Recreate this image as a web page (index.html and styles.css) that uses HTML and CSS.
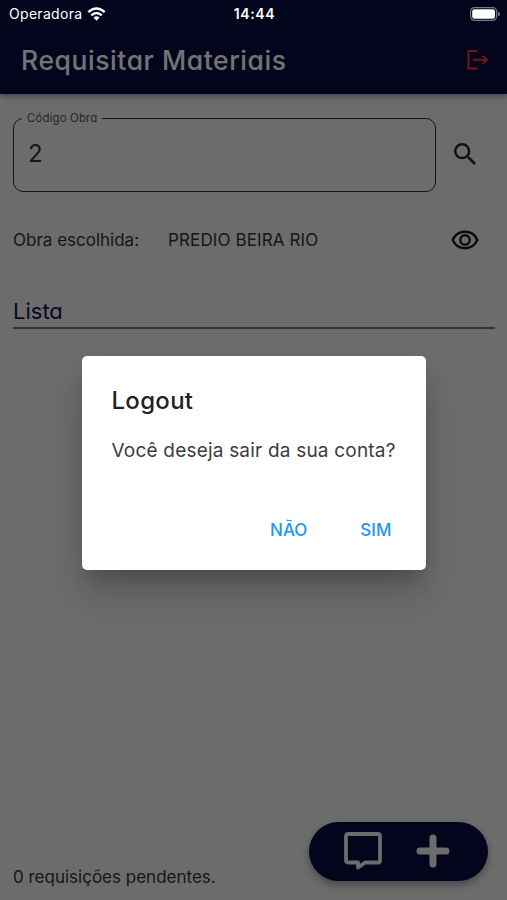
FILE: index.html
```
<!DOCTYPE html>
<html lang="pt-BR">
<head>
    <meta charset="utf-8">
    <title>Requisitar Materiais</title>
    <meta name="viewport" content="width=device-width, initial-scale=1.0">
    <link rel="stylesheet" href="styles.css">
</head>
<body>
    <div class="screen">
        <header class="app-bar">
            <h1>Requisitar Materiais</h1>
            <svg class="exit-icon" viewBox="0 0 22 20" width="22" height="20">
                <path d="M10.5 1H1.5V18.5H10.5M6 9.8H20M15.5 5.8L20 9.8L15.5 13.8"/>
            </svg>
        </header>

        <main class="content">
            <div class="search-row">
                <fieldset class="field">
                    <legend>Código Obra</legend>
                    <div class="field-value">2</div>
                </fieldset>
                <svg class="search-icon" viewBox="3 3 17.5 17.5" width="22" height="22">
                    <path d="M15.5 14h-.79l-.28-.27A6.471 6.471 0 0 0 16 9.5 6.5 6.5 0 1 0 9.5 16c1.61 0 3.09-.59 4.23-1.57l.27.28v.79l5 4.99L20.49 19l-4.99-5zm-6 0C7.01 14 5 11.99 5 9.5S7.01 5 9.5 5 14 7.01 14 9.5 11.99 14 9.5 14z"/>
                </svg>
            </div>

            <div class="chosen-row">
                <span class="chosen-label">Obra escolhida:</span>
                <span class="chosen-name">PREDIO BEIRA RIO</span>
                <svg class="eye-icon" viewBox="0 0 28 20" width="28" height="20">
                    <path d="M1.7 10C4 4.7 8.5 1.8 14 1.8S24 4.7 26.3 10C24 15.3 19.5 18.2 14 18.2S4 15.3 1.7 10Z"/>
                    <circle cx="14" cy="10" r="4.7"/>
                </svg>
            </div>

            <h2>Lista</h2>
        </main>

        <footer class="bottom">
            <p class="pending">0 requisições pendentes.</p>
            <div class="fab">
                <svg class="comment-icon" viewBox="0 0 38 38" width="38" height="38">
                    <path d="M4 2H34Q36 2 36 4V28.5Q36 30.5 34 30.5H21L14 35.5V30.5H4Q2 30.5 2 28.5V4Q2 2 4 2Z"/>
                </svg>
                <svg class="plus-icon" viewBox="0 0 34 34" width="34" height="34">
                    <path d="M17 4V30M4 17H30"/>
                </svg>
            </div>
        </footer>
    </div>

    <div class="overlay">
        <div class="dialog">
            <h3>Logout</h3>
            <p>Você deseja sair da sua conta?</p>
            <div class="actions">
                <button class="no">NÃO</button>
                <button class="yes">SIM</button>
            </div>
        </div>
    </div>

    <div class="status-bar">
        <div class="carrier">
            <span>Operadora</span>
            <svg viewBox="0 0 20 15" width="19" height="14">
                <path class="wave" d="M1.2 5.5Q10 -2.4 18.8 5.5M4.4 8.9Q10 4 15.6 8.9"/>
                <path class="dot" d="M6.8 11.3Q10 8.6 13.2 11.3L10 14.6Z"/>
            </svg>
        </div>
        <span class="time">14:44</span>
        <svg class="battery" viewBox="0 0 30 14" width="30" height="14">
            <rect class="shell" x=".6" y=".6" width="26" height="12.8" rx="4"/>
            <rect class="level" x="2.2" y="2.2" width="22.8" height="9.6" rx="2.4"/>
            <path class="tip" d="M28 4.7Q30 5.3 30 7T28 9.3Z"/>
        </svg>
    </div>
</body>
</html>
```
FILE: styles.css
```
* {
    box-sizing: border-box;
}
body {
    margin: 0;
    font-family: Inter, "Liberation Sans", sans-serif;
    color: #333;
}
h1, h2, h3, p {
    margin: 0;
}
svg {
    display: block;
    flex: none;
}
.screen {
    display: flex;
    flex-direction: column;
    height: 900px;
    background-color: #ececec;
}
.app-bar {
    display: flex;
    align-items: center;
    justify-content: space-between;
    height: 94px;
    padding: 26px 18px 0 21px;
    background-color: #080b40;
    box-shadow: 0 2px 6px rgba(0, 0, 0, 0.4);
}
h1 {
    color: #fafafa;
    font-size: 26.5px;
    font-weight: 500;
    line-height: 36px;
    letter-spacing: 0.57px;
    font-feature-settings: "cv11";
    white-space: nowrap;
}
.exit-icon {
    fill: none;
    stroke: #f4303a;
    stroke-width: 2;
}
.content {
    padding: 18px 12px 0 13px;
}
.search-row {
    display: flex;
    height: 80px;
}
.field {
    width: 423px;
    height: 80px;
    margin: 0;
    padding: 0 14px;
    border: 1.5px solid #262a60;
    border-radius: 10px;
    position: relative;
    top: -0.5px;
}
.field legend {
    margin-left: -6px;
    padding: 0 5px;
    color: #555;
    font-size: 11.5px;
    line-height: 13px;
    letter-spacing: 0.1px;
    font-feature-settings: "cv11";
}
.field-value {
    margin-top: 14px;
    font-size: 24px;
    line-height: 30px;
}
.search-icon {
    margin: 31px 0 0 18px;
    fill: #222;
}
.chosen-row {
    display: flex;
    align-items: center;
    height: 30px;
    margin-top: 33px;
    font-size: 17px;
}
.chosen-label {
    width: 155px;
}
.chosen-name {
    flex: 1;
    letter-spacing: 0.12px;
}
.eye-icon {
    margin-right: 16px;
    fill: none;
    stroke: #1a1a1a;
    stroke-width: 2.4;
}
h2 {
    height: 34px;
    margin-top: 40px;
    border-bottom: 2px solid #70708a;
    color: #10134c;
    font-size: 22px;
    font-weight: 400;
    line-height: 32px;
    font-feature-settings: "cv11";
}
.bottom {
    display: flex;
    align-items: flex-end;
    justify-content: space-between;
    margin-top: auto;
    padding: 0 19px 19px 13px;
}
.pending {
    margin-bottom: -7px;
    font-size: 17px;
    line-height: 22px;
}
.fab {
    display: flex;
    align-items: center;
    gap: 34px;
    width: 179px;
    height: 59px;
    padding-left: 35px;
    border-radius: 30px;
    background-color: #080b40;
    box-shadow: 0 4px 9px rgba(0, 0, 0, 0.35);
}
.fab svg {
    fill: none;
    stroke: #ececec;
}
.comment-icon {
    margin-top: -2px;
    stroke-width: 3.8;
    stroke-linejoin: round;
}
.plus-icon {
    margin-top: -1px;
    stroke-width: 7;
    stroke-linecap: round;
}
.overlay {
    position: absolute;
    top: 0;
    left: 0;
    display: flex;
    justify-content: center;
    width: 100%;
    height: 900px;
    padding-top: 356px;
    background-color: rgba(0, 0, 0, 0.54);
}
.dialog {
    width: 344px;
    height: 214px;
    padding: 29px 20px 0 30px;
    border-radius: 5px;
    background-color: #fff;
    box-shadow: 0 14px 20px -6px rgba(0, 0, 0, 0.2), 0 26px 38px rgba(0, 0, 0, 0.14);
}
.dialog h3 {
    color: #222;
    font-size: 24px;
    font-weight: 500;
    line-height: 32px;
    letter-spacing: 0.3px;
}
.dialog p {
    margin-top: 20px;
    color: #3c3c3c;
    font-size: 19px;
    line-height: 28px;
    letter-spacing: 0.2px;
    white-space: nowrap;
}
.actions {
    display: flex;
    justify-content: flex-end;
    gap: 53px;
    margin-top: 53px;
    padding-right: 14px;
}
.actions button {
    padding: 0;
    border: none;
    background: none;
    color: #2196f3;
    font-family: inherit;
    font-size: 17px;
    font-weight: 500;
    line-height: 24px;
}
.status-bar {
    position: absolute;
    top: 0;
    left: 0;
    display: grid;
    grid-template-columns: 1fr auto 1fr;
    align-items: center;
    width: 100%;
    height: 27px;
    padding: 0 7px 0 9px;
    color: #fff;
    font-size: 14px;
}
.carrier {
    display: flex;
    align-items: center;
    gap: 5px;
    letter-spacing: 0.3px;
}
.wave {
    fill: none;
    stroke: #fff;
    stroke-width: 2.5;
}
.dot {
    fill: #fff;
}
.time {
    font-weight: 600;
    letter-spacing: 0.6px;
}
.battery {
    justify-self: end;
}
.shell {
    fill: none;
    stroke: #777986;
    stroke-width: 1.2;
}
.level {
    fill: #fff;
}
.tip {
    fill: #777986;
}
```
